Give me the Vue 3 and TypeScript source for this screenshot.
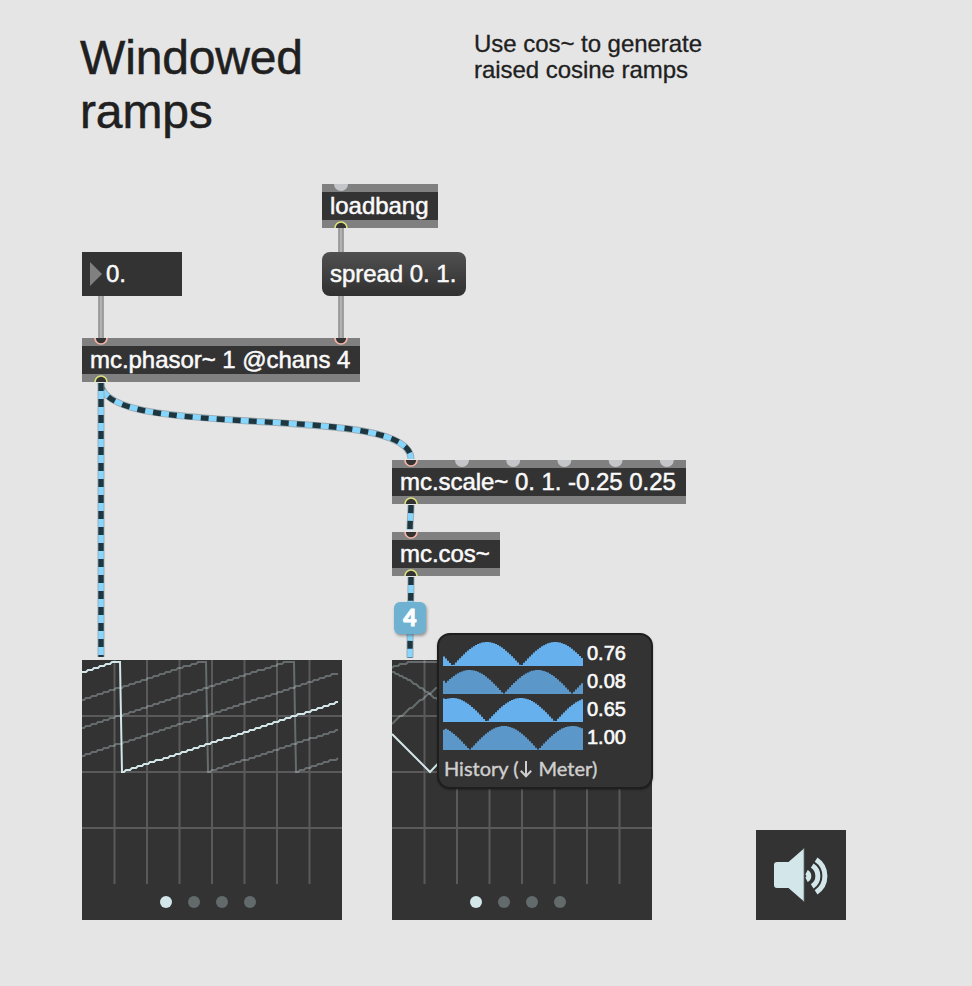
<script setup lang="ts">
interface PatchNode {
  id: string
  kind: 'object' | 'message' | 'number'
  text: string
  x: number
  y: number
  w: number
  hot: number[]
  cold: number[]
  outlets: number[]
}

interface Trace {
  points: string
  active: boolean
}

const nodes: PatchNode[] = [
  { id: 'loadbang', kind: 'object', text: 'loadbang', x: 322, y: 184, w: 116, hot: [], cold: [19], outlets: [19] },
  { id: 'number', kind: 'number', text: '0.', x: 82, y: 252, w: 100, hot: [], cold: [], outlets: [] },
  { id: 'spread', kind: 'message', text: 'spread 0. 1.', x: 322, y: 252, w: 144, hot: [], cold: [], outlets: [] },
  { id: 'phasor', kind: 'object', text: 'mc.phasor~ 1 @chans 4', x: 82, y: 338, w: 278, hot: [19, 259], cold: [], outlets: [19] },
  { id: 'scale', kind: 'object', text: 'mc.scale~ 0. 1. -0.25 0.25', x: 392, y: 460, w: 294, hot: [19], cold: [70, 121.2, 172.4, 223.6, 274.8], outlets: [19] },
  { id: 'cos', kind: 'object', text: 'mc.cos~', x: 392, y: 532, w: 108, hot: [19], cold: [], outlets: [19] },
]

const controlCords = ['M341 228V252', 'M341 296V338', 'M101 296V338']
const signalCords = [
  'M101 383C101 442 411 401 411 459',
  'M101 383V657',
  'M411 505C411 514 410 520 410 529.500',
  'M411 577C411 600 410 620 410 657.500',
]

function place(n: { x: number; y: number; w: number }) {
  return { left: `${n.x}px`, top: `${n.y}px`, width: `${n.w}px` }
}

const gridX = [32.5, 65, 97.5, 130, 162.5, 195, 227.5]
const gridY = [56, 112, 168]

// Samples a curve every two pixels, snapping the level to the scope's resolution.
function sample(from: number, to: number, level: (x: number) => number): string {
  const out: string[] = []
  for (let x = from; x <= to; x += 2) {
    out.push(`${x},${Math.round(level(x) / 2) * 2}`)
  }
  return out.join(' ')
}

const slope = 70 / 216

function ramp(start: number, wrap: number | null): string {
  if (wrap === null) return sample(0, 256, (x) => start - slope * x)
  const rising = sample(0, wrap - 2, (x) => Math.max(2, start - slope * x))
  const falling = sample(wrap, 256, (x) => 112 - slope * (x - wrap))
  return `${rising} ${falling}`
}

const rampTraces: Trace[] = [
  { points: ramp(40, 126), active: false },
  { points: ramp(68, 214), active: false },
  { points: ramp(96, null), active: false },
  { points: ramp(12.5, 40), active: true },
]

const cosTraces: Trace[] = [
  { points: sample(0, 60, (x) => 1.5 + 6 * Math.pow(Math.max(0, 1 - x / 28), 2)), active: false },
  { points: sample(0, 60, (x) => 12 + 0.42 * x + 0.0042 * x * x), active: false },
  { points: sample(0, 60, (x) => 63.5 - 0.84 * x + 0.0012 * x * x), active: false },
  { points: '0,74 38,112 56,93', active: true },
]

const scopes = [
  { id: 'ramps', x: 82, y: 660, w: 260, traces: rampTraces },
  { id: 'windows', x: 392, y: 660, w: 260, traces: cosTraces },
]

// Rectified sine history, drawn as two pixel wide columns.
function history(zero: number, fold: boolean): string {
  let d = 'M0 24'
  for (let x = 0; x < 140; x += 2) {
    const at = fold && x < 2 ? 5 - x : x + 1
    const h = Math.max(0.6, 24 * Math.abs(Math.sin((Math.PI * (at - zero)) / 68.3)))
    d += `V${(24 - h).toFixed(2)}H${x + 2}`
  }
  return `${d}V24Z`
}

const channels = [
  { value: '0.76', path: history(9.8, false), dim: false },
  { value: '0.08', path: history(60.7, true), dim: true },
  { value: '0.65', path: history(43.8, true), dim: false },
  { value: '1.00', path: history(26.8, true), dim: true },
]
</script>

<template>
  <main class="patcher">
    <h1 class="title">Windowed<br />ramps</h1>
    <p class="comment">Use cos~ to generate<br />raised cosine ramps</p>

    <div v-for="n in nodes" :key="n.id" class="node" :class="n.kind" :style="place(n)">
      <svg v-if="n.kind === 'number'" class="arrow" viewBox="0 0 12 24"><path d="M0 0L12 12L0 24Z" /></svg>
      <span class="label">{{ n.text }}</span>
      <svg v-if="n.kind === 'object'" class="ports" :viewBox="`0 0 ${n.w} 44`">
        <circle v-for="p in n.cold" :key="`c${p}`" class="cold" :cx="p" cy="0" r="7" />
        <circle v-for="p in n.hot" :key="`h${p}`" class="hot" :cx="p" cy="0" r="6" />
        <circle v-for="p in n.outlets" :key="`o${p}`" class="outlet" :cx="p" cy="44" r="6" />
      </svg>
    </div>

    <section v-for="s in scopes" :key="s.id" class="scope" :style="place(s)">
      <svg class="plot" viewBox="0 0 260 224">
        <g class="grid">
          <path v-for="x in gridX" :key="`x${x}`" :d="`M${x} 0V224`" />
          <path v-for="y in gridY" :key="`y${y}`" :d="`M0 ${y}H260`" />
        </g>
        <polyline v-for="(t, i) in s.traces" :key="i" class="trace" :class="{ active: t.active }" :points="t.points" />
      </svg>
      <div class="pages">
        <i v-for="k in 4" :key="k" class="page" :class="{ on: k === 1 }"></i>
      </div>
    </section>

    <svg class="cords" viewBox="0 0 972 986">
      <g v-for="d in controlCords" :key="d">
        <path class="control-edge" :d="d" />
        <path class="control-core" :d="d" />
      </g>
      <g v-for="d in signalCords" :key="d">
        <path class="signal-edge" :d="d" />
        <path class="signal-core" :d="d" />
        <path class="signal-dash" :d="d" />
      </g>
    </svg>

    <div class="badge">4</div>

    <aside class="probe">
      <div v-for="c in channels" :key="c.value" class="channel">
        <svg class="wave" :class="{ dim: c.dim }" viewBox="0 0 140 24"><path :d="c.path" /></svg>
        <span class="value">{{ c.value }}</span>
      </div>
      <div class="caption">
        <span>History (</span>
        <svg class="down" viewBox="0 0 12 18"><path d="M6 1V16M0.800 10.800L6 16.200L11.200 10.800" /></svg>
        <span class="rest">Meter)</span>
      </div>
    </aside>

    <button class="dac" type="button">
      <svg viewBox="0 0 90 90">
        <path class="fill" d="M21 32H32.500L48 18.500V71.500L32.500 58H21Q18 58 18 55V35Q18 32 21 32Z" />
        <path class="back" d="M48 18V72" />
        <path class="arc" d="M50.500 42.200A4.300 4.300 0 0 1 50.500 49.800" />
        <path class="arc" d="M56.200 35.700A12.200 12.200 0 0 1 56.200 56.300" />
        <path class="arc" d="M60.100 29.700A19.500 19.500 0 0 1 60.100 62.300" />
      </svg>
    </button>
  </main>
</template>

<style>
body {
  margin: 0;
  background: #e5e5e5;
}
</style>

<style scoped>
.patcher {
  position: relative;
  width: 972px;
  height: 986px;
  overflow: hidden;
  background: #e5e5e5;
  font-family: 'Liberation Sans', Arial, sans-serif;
  color: #202020;
}

.title {
  position: absolute;
  left: 80px;
  top: 31px;
  margin: 0;
  font-size: 48px;
  line-height: 54px;
  font-weight: 400;
  letter-spacing: -0.15px;
  -webkit-text-stroke: 0.5px #202020;
}

.comment {
  position: absolute;
  left: 474px;
  top: 31px;
  margin: 0;
  font-size: 24px;
  line-height: 26px;
  letter-spacing: -0.04px;
  -webkit-text-stroke: 0.3px #202020;
}

.node {
  position: absolute;
  box-sizing: border-box;
  display: flex;
  align-items: center;
  height: 44px;
  padding: 0 8px;
  background: #333;
  color: #fafafa;
  font-size: 24px;
  line-height: 28px;
  letter-spacing: -0.04px;
  white-space: nowrap;
  -webkit-text-stroke: 0.5px #fafafa;
}

.object {
  border-top: 8px solid #808080;
  border-bottom: 8px solid #808080;
}

.message {
  border-radius: 8px;
  background: linear-gradient(#505050, #303030);
}

.arrow {
  width: 12px;
  height: 24px;
  margin-right: 4px;
  fill: #808080;
}

.ports {
  position: absolute;
  left: 0;
  top: -8px;
  width: 100%;
  height: 44px;
  overflow: hidden;
}

.cold {
  fill: #c4c5c8;
}

.hot,
.outlet {
  fill: #333;
  stroke-width: 1.7;
}

.hot {
  stroke: #f7b3a6;
}

.outlet {
  stroke: #dce27a;
}

.cords {
  position: absolute;
  left: 0;
  top: 0;
  width: 972px;
  height: 986px;
  fill: none;
}

.control-edge {
  stroke: #919191;
  stroke-width: 5.6;
}

.control-core {
  stroke: #b2b2b2;
  stroke-width: 2.6;
}

.signal-edge {
  stroke: #a0abb0;
  stroke-width: 7;
}

.signal-core {
  stroke: #85d7ff;
  stroke-width: 5;
}

.signal-dash {
  stroke: #20363f;
  stroke-width: 5.4;
  stroke-dasharray: 8 8;
}

.scope {
  position: absolute;
  height: 260px;
  background: #333;
}

.plot {
  display: block;
  width: 260px;
  height: 224px;
}

.grid {
  stroke: #5a5a5a;
  stroke-width: 2;
}

.trace {
  fill: none;
  stroke: #d3e6ea;
  stroke-opacity: 0.32;
  stroke-width: 2;
}

.trace.active {
  stroke-opacity: 1;
}

.pages {
  display: flex;
  justify-content: center;
  gap: 16px;
  padding: 12px 8px 0 0;
}

.page {
  width: 12px;
  height: 12px;
  border-radius: 50%;
  background: #636a6c;
}

.page.on {
  background: #d3e6ea;
}

.badge {
  position: absolute;
  left: 394px;
  top: 602px;
  width: 32px;
  height: 32px;
  border-radius: 6px;
  background: #6fb1d1;
  box-shadow: 1px 2px 3px rgba(0, 0, 0, 0.35);
  color: #fff;
  font: 900 23px/31px Lato, sans-serif;
  text-align: center;
  -webkit-text-stroke: 0.9px #fff;
}

.probe {
  position: absolute;
  left: 437px;
  top: 633px;
  box-sizing: border-box;
  width: 216px;
  height: 156px;
  padding: 7px 4px;
  border: 2px solid #1d1f1f;
  border-radius: 13px;
  background: #333;
  box-shadow: 0 1px 2px rgba(0, 0, 0, 0.35);
  color: #fafafa;
}

.channel {
  display: flex;
  align-items: center;
  gap: 4px;
  height: 24px;
  margin-bottom: 4px;
}

.wave {
  width: 140px;
  height: 24px;
  fill: #66b0ee;
}

.wave.dim {
  fill: #5b97c9;
}

.value {
  padding-bottom: 2px;
  font-size: 20px;
  line-height: 22px;
  -webkit-text-stroke: 0.6px #fafafa;
}

.caption {
  display: flex;
  align-items: center;
  padding-left: 1px;
  font: 400 20px/28px Lato, sans-serif;
  color: #cfcfcf;
  -webkit-text-stroke: 0.4px #cfcfcf;
}

.down {
  width: 12px;
  height: 18px;
  margin: 2px 0 0 1px;
  fill: none;
  stroke: #cfcfcf;
  stroke-width: 2;
}

.rest {
  margin-left: 7px;
}

.dac {
  position: absolute;
  left: 756px;
  top: 830px;
  width: 90px;
  height: 90px;
  padding: 0;
  border: 0;
  background: #333;
}

.dac svg {
  display: block;
  width: 90px;
  height: 90px;
}

.fill {
  fill: #d3e6ea;
}

.back {
  stroke: #687173;
  stroke-width: 0.8;
}

.arc {
  fill: none;
  stroke: #d3e6ea;
  stroke-width: 5;
}
</style>
